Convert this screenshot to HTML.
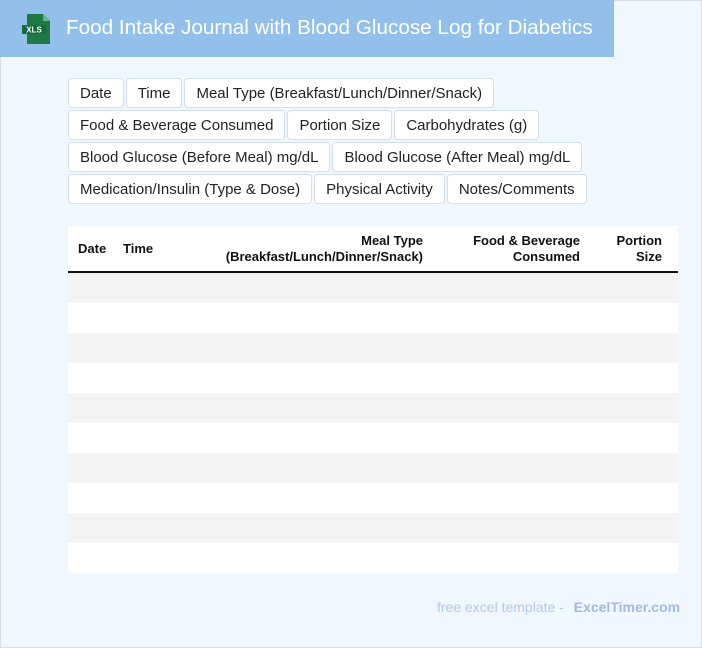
<!DOCTYPE html>
<html><head><style>
*{margin:0;padding:0;box-sizing:border-box}
body{width:702px;height:648px;background:#f0f7ff;font-family:"Liberation Sans",sans-serif;position:relative;overflow:hidden}
.frame{position:absolute;left:0;top:0;width:702px;height:648px;border:1px solid #d5dee9}
.hdr{position:absolute;left:0;top:0;width:614px;height:57px;background:#92c0ea}
.hdr h1{position:absolute;left:66px;top:16px;font-size:20.7px;font-weight:normal;color:#fff;white-space:nowrap}
.tags{position:absolute;left:68px;top:78px;width:540px}
.row{display:flex;gap:2px;margin-bottom:2px}
.tag{height:30px;line-height:29px;padding:0 11px;border:1px solid #d6e0ea;border-radius:4px;background:#fff;font-size:15px;color:#222;white-space:nowrap}
.tbl{position:absolute;left:68px;top:226px;width:610px}
.th{height:47px;background:#fff;border-bottom:2px solid #111;position:relative;font-size:13px;font-weight:bold;color:#111}
.th div{position:absolute;line-height:16px}
.r{height:30px}
.r:nth-child(odd){background:#f4f4f4}
.r:nth-child(even){background:#fff}
.ft{position:absolute;top:599px;left:437px;font-size:14px;color:#b7c6ee;white-space:nowrap}
.ft b{color:#a2b8ec;margin-left:6px}
</style></head><body>
<div class="frame"></div>
<div class="hdr">
<svg style="position:absolute;left:20px;top:13px" width="32" height="32" viewBox="0 0 32 32">
<path d="M7 1h16l7 7v23H7z" fill="#1e7a45"/><path d="M23 1l7 7h-7z" fill="#5fb386"/>
<rect x="2" y="12" width="24" height="9" fill="#176a3a"/>
<text x="14" y="19.5" font-size="8" font-weight="bold" fill="#fff" text-anchor="middle" font-family="Liberation Sans">XLS</text>
</svg>
<h1>Food Intake Journal with Blood Glucose Log for Diabetics</h1>
</div>
<div class="tags">
<div class="row"><span class="tag">Date</span><span class="tag">Time</span><span class="tag">Meal Type (Breakfast/Lunch/Dinner/Snack)</span></div>
<div class="row"><span class="tag">Food &amp; Beverage Consumed</span><span class="tag">Portion Size</span><span class="tag">Carbohydrates (g)</span></div>
<div class="row"><span class="tag">Blood Glucose (Before Meal) mg/dL</span><span class="tag">Blood Glucose (After Meal) mg/dL</span></div>
<div class="row"><span class="tag">Medication/Insulin (Type &amp; Dose)</span><span class="tag">Physical Activity</span><span class="tag">Notes/Comments</span></div>
</div>
<div class="tbl">
<div class="th">
<div style="left:10px;top:15px">Date</div>
<div style="left:55px;top:15px">Time</div>
<div style="right:255px;top:7px;text-align:right">Meal Type<br>(Breakfast/Lunch/Dinner/Snack)</div>
<div style="right:98px;top:7px;text-align:right">Food &amp; Beverage<br>Consumed</div>
<div style="right:16px;top:7px;text-align:right">Portion<br>Size</div>
</div>
<div><div class="r"></div><div class="r"></div><div class="r"></div><div class="r"></div><div class="r"></div><div class="r"></div><div class="r"></div><div class="r"></div><div class="r"></div><div class="r"></div></div>
</div>
<div class="ft">free excel template - <b>ExcelTimer.com</b></div>
</body></html>
